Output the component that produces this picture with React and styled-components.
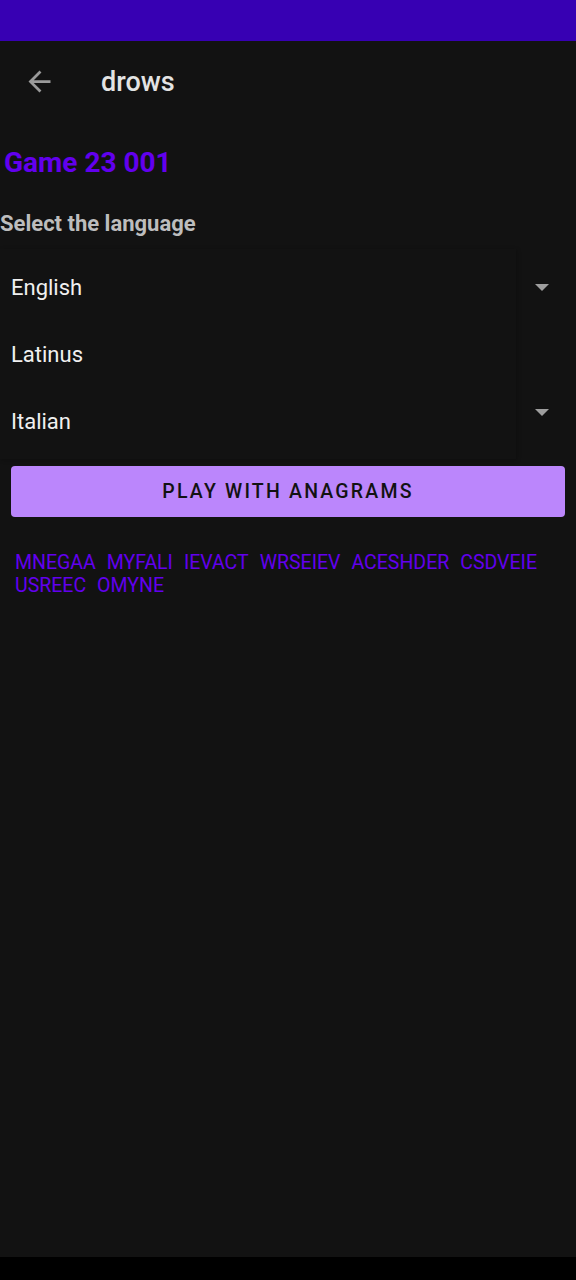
import React from "react"
import styled, { createGlobalStyle } from "styled-components"

const GlobalStyle = createGlobalStyle`
  html, body {
    margin: 0;
    padding: 0;
    background: #121212;
  }
  body {
    font-family: Roboto, "Noto Sans", sans-serif;
  }
`

const Screen = styled.div`
  width: 576px;
  height: 1280px;
  display: flex;
  flex-direction: column;
  background-color: #121212;
  overflow: hidden;
`

const StatusBar = styled.div`
  height: 41px;
  background-color: #3700b3;
  flex-shrink: 0;
`

const Toolbar = styled.div`
  height: 81px;
  display: flex;
  align-items: center;
  flex-shrink: 0;
`

const BackBtn = styled.div`
  width: 78px;
  padding-left: 23px;
  box-sizing: border-box;
  display: flex;
  align-items: center;
`

const Title = styled.h1`
  margin: 0 0 0 23px;
  font-size: 27px;
  font-weight: 500;
  color: #e3e3e3;
`

const Content = styled.div`
  flex: 1;
  display: flex;
  flex-direction: column;
`

const GameTitle = styled.h2`
  margin: 24px 0 0 4px;
  font-size: 28px;
  font-weight: 700;
  color: #6200ee;
  line-height: 34px;
`

const Label = styled.h3`
  margin: 32px 0 0 0;
  font-size: 22px;
  font-weight: 700;
  color: #bdbdbd;
  line-height: 24px;
`

// dropdown list that is open over the two spinners
const Popup = styled.div`
  margin-top: 13px;
  width: 516px;
  height: 210px;
  position: relative;
  box-shadow: 1px 1px 4px rgba(0, 0, 0, 0.25);
  display: flex;
  flex-direction: column;
  justify-content: center;
`

const Option = styled.div`
  height: 67px;
  display: flex;
  align-items: center;
  padding-left: 11px;
  font-size: 22px;
  color: #f0f0f0;
`

const Caret = styled.div`
  position: absolute;
  right: -33px;
  top: ${p => p.$top}px;
  width: 0;
  height: 0;
  border-left: 7px solid transparent;
  border-right: 7px solid transparent;
  border-top: 7px solid #9e9e9e;
`

const PlayButton = styled.button`
  margin: 7px 11px 0 11px;
  height: 51px;
  border: none;
  border-radius: 4px;
  background-color: #bb86fc;
  color: #121212;
  font-family: Roboto, sans-serif;
  font-size: 19.5px;
  font-weight: 500;
  letter-spacing: 2.2px;
  cursor: pointer;
`

const Words = styled.div`
  margin: 34px 15px 0 15px;
  display: flex;
  flex-wrap: wrap;
  column-gap: 11px;
  font-size: 19.5px;
  line-height: 23px;
  color: #6200ee;
`

const NavBar = styled.div`
  height: 23px;
  background-color: #000;
  flex-shrink: 0;
`

const words = ["MNEGAA", "MYFALI", "IEVACT", "WRSEIEV", "ACESHDER", "CSDVEIE", "USREEC", "OMYNE"]

const App = () => {
  return (
    <Screen>
      <GlobalStyle />
      <StatusBar />
      <Toolbar>
        <BackBtn>
          <svg width="33" height="33" viewBox="0 0 24 24">
            <path d="M20 11H7.83l5.59-5.59L12 4l-8 8 8 8 1.41-1.41L7.83 13H20v-2z" fill="#9a9a9a" />
          </svg>
        </BackBtn>
        <Title>drows</Title>
      </Toolbar>
      <Content>
        <GameTitle>Game 23 001</GameTitle>
        <Label>Select the language</Label>
        <Popup>
          <Option>English</Option>
          <Option>Latinus</Option>
          <Option>Italian</Option>
          <Caret $top={35} />
          <Caret $top={160} />
        </Popup>
        <PlayButton>PLAY WITH ANAGRAMS</PlayButton>
        <Words>
          {words.map(w => <span key={w}>{w}</span>)}
        </Words>
      </Content>
      <NavBar />
    </Screen>
  )
}

export default App
